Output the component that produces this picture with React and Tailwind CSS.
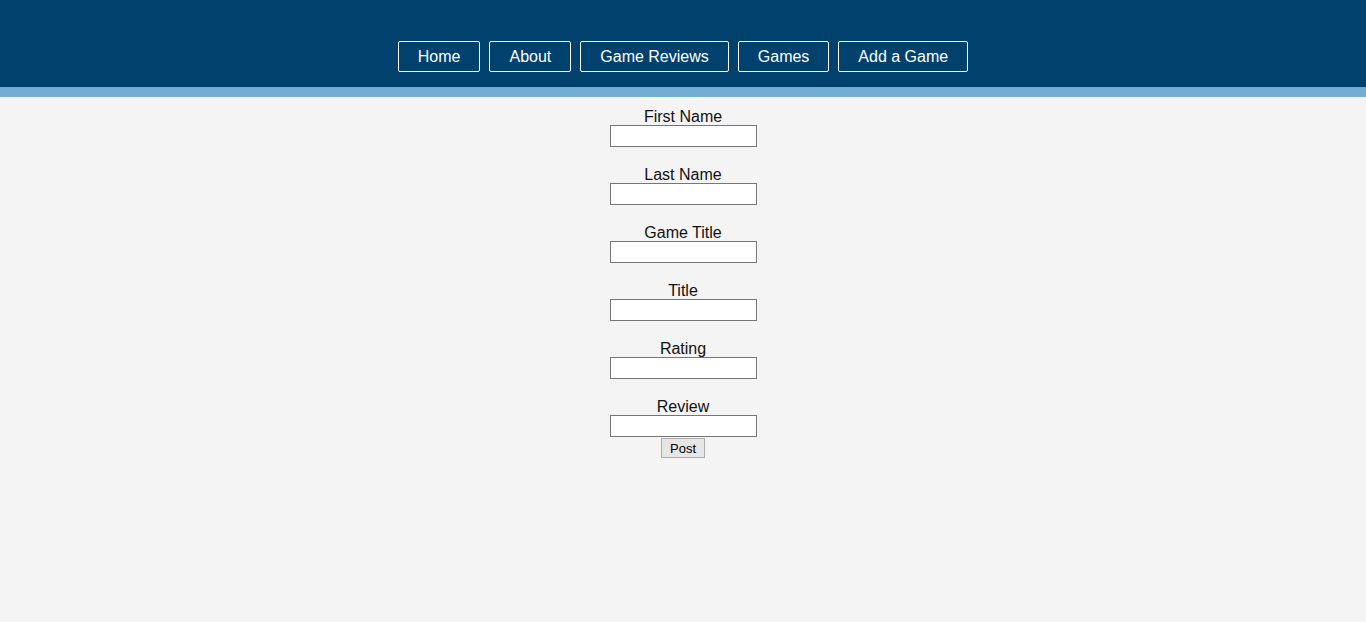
import React, { useState } from "react";

const links = ["Home", "About", "Game Reviews", "Games", "Add a Game"];

const fields = [
  { name: "firstName", label: "First Name" },
  { name: "lastName", label: "Last Name" },
  { name: "gameTitle", label: "Game Title" },
  { name: "title", label: "Title" },
  { name: "rating", label: "Rating" },
  { name: "review", label: "Review" },
];

export default function App() {
  const [form, setForm] = useState({});

  const handleChange = (e) => {
    setForm({ ...form, [e.target.name]: e.target.value });
  };

  return (
    <div className="min-h-[622px] bg-[#f4f4f4] font-['Liberation_Sans',Arial,sans-serif]">
      {/* Header */}
      <header className="bg-[#00416d] border-b-[10px] border-[#72acd0]">
        <nav className="flex justify-center gap-[9px] pt-[41px] pb-[15px]">
          {links.map((l) => (
            <a
              key={l}
              href="#"
              className="h-[31px] flex items-center px-[19px] border border-white rounded-[2px] text-white text-base"
            >
              {l}
            </a>
          ))}
        </nav>
      </header>

      {/* Form */}
      <form
        className="flex flex-col items-center pt-[10px]"
        onSubmit={(e) => e.preventDefault()}
      >
        {fields.map((f, i) => (
          <div
            key={f.name}
            className={`flex flex-col items-center ${i < fields.length - 1 ? "mb-[18px]" : ""}`}
          >
            <label className="text-base leading-[16px] pt-[2px] text-[#111]">{f.label}</label>
            <input
              type="text"
              name={f.name}
              value={form[f.name] || ""}
              onChange={handleChange}
              className="w-[147px] h-[22px] bg-white border border-[#767676] px-[2px] text-[13px]"
            />
          </div>
        ))}
        <button
          type="submit"
          className="mt-[1px] w-[44px] h-[20px] bg-[#e6e6e6] border border-[#adadad] text-[13px] leading-none text-black"
        >
          Post
        </button>
      </form>
    </div>
  );
}
